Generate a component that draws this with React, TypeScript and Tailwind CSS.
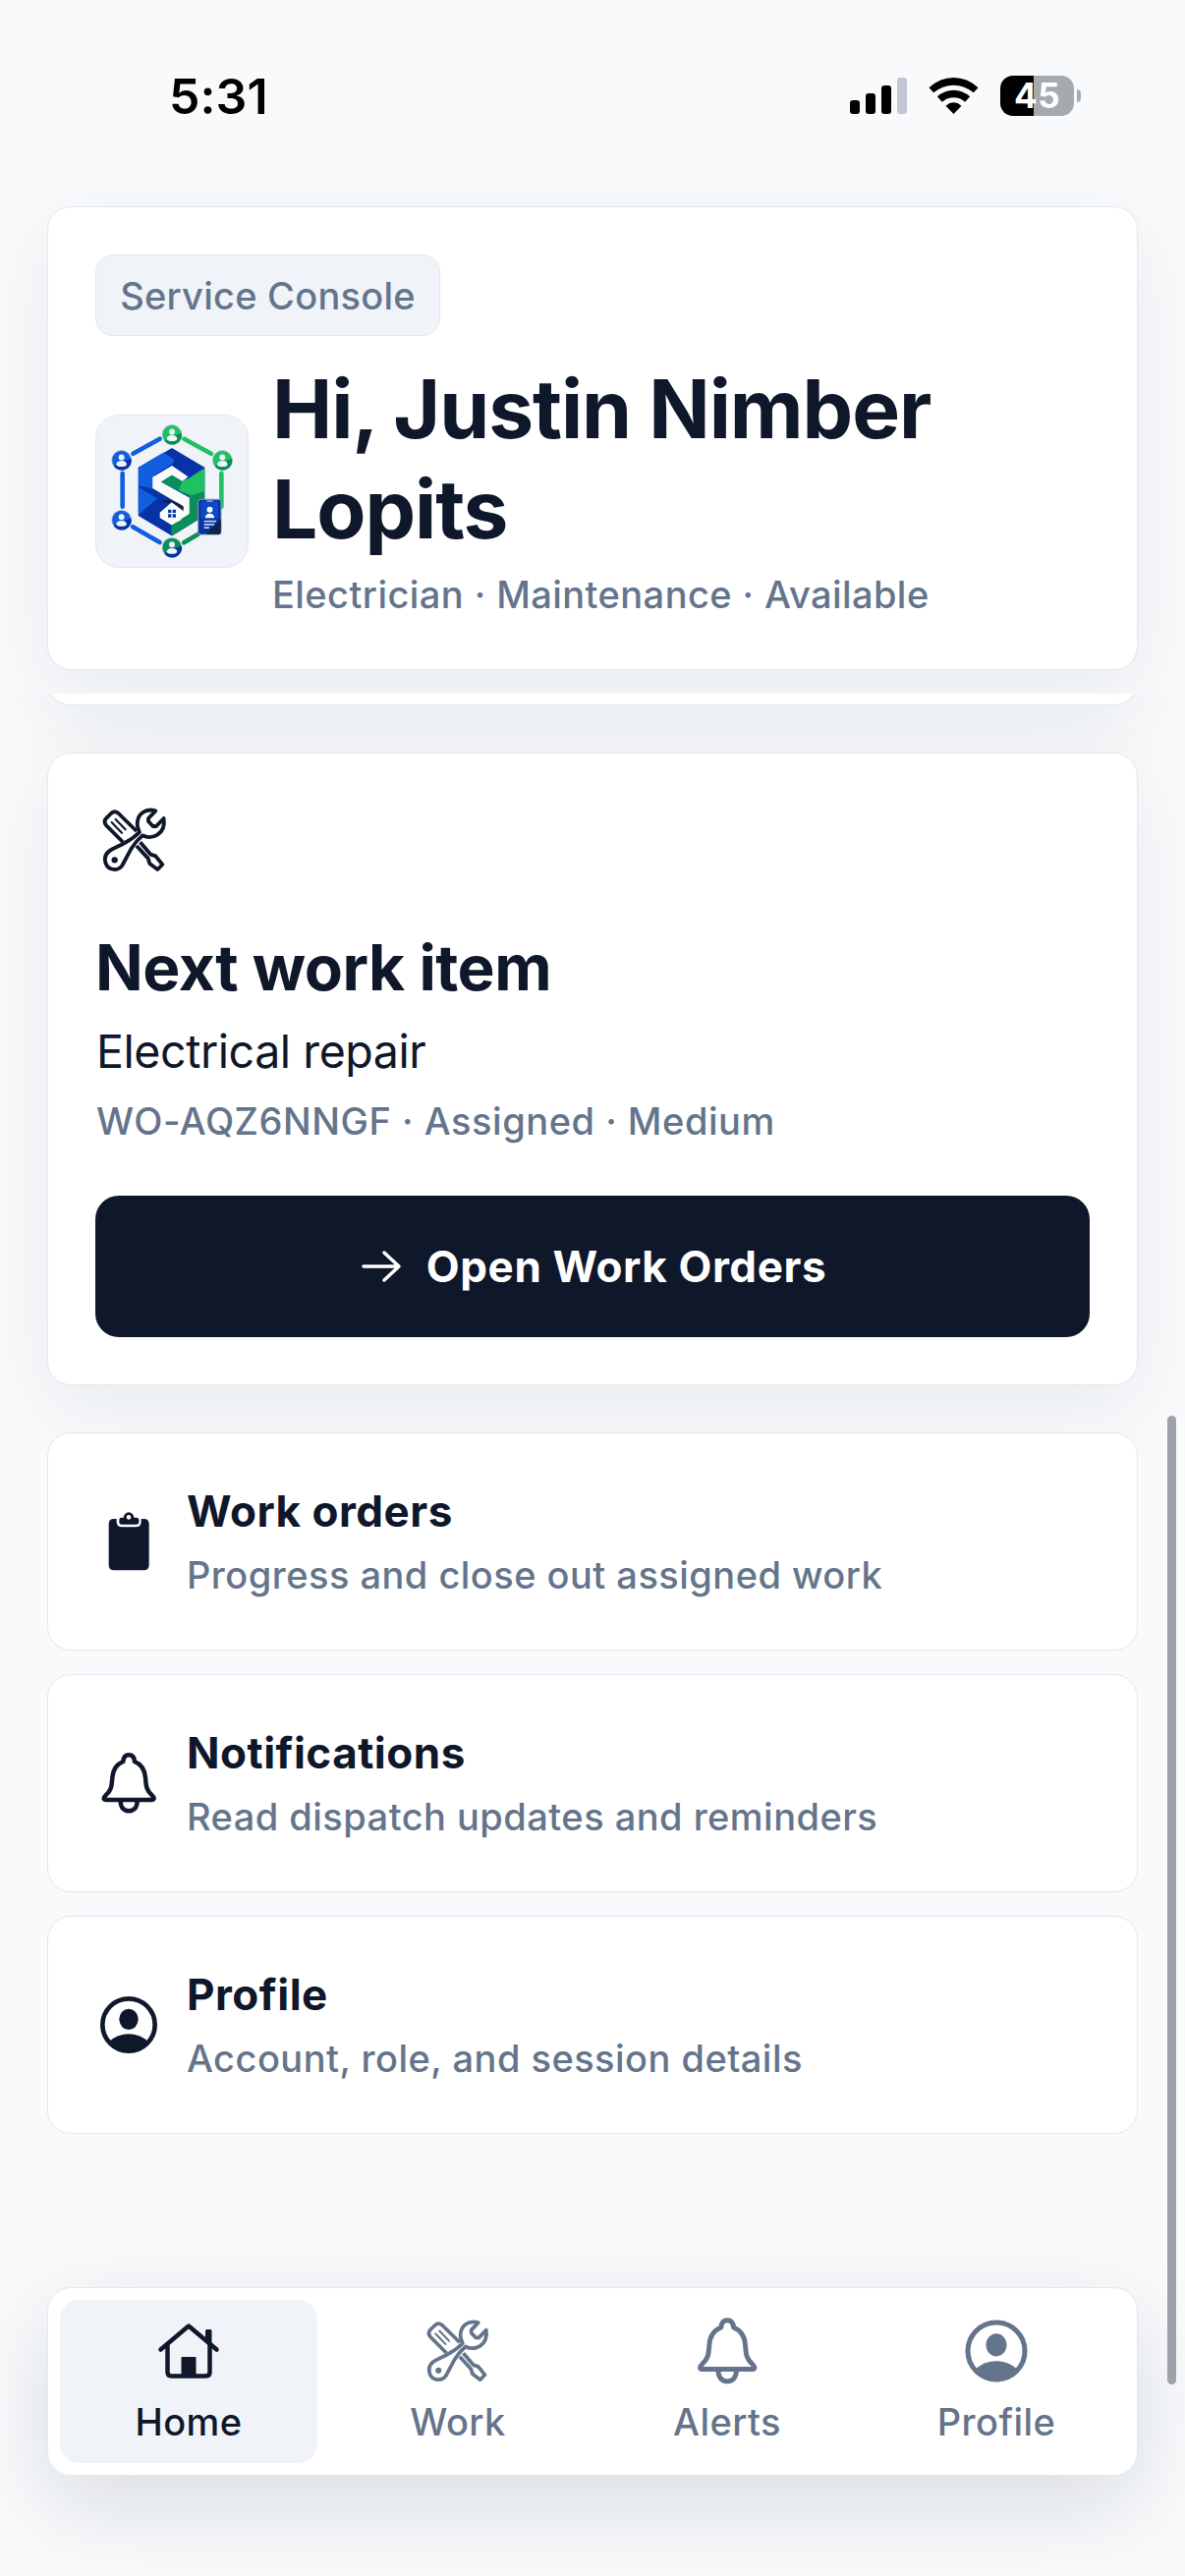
import React from "react";
import clsx from "clsx";

type IconProps = { className?: string };

function ToolsIcon({ className }: IconProps) {
  return (
    <svg
      viewBox="64 84 216 216"
      fill="none"
      stroke="currentColor"
      strokeWidth="11.500"
      strokeLinejoin="round"
      className={className}
    >
      <path d="M136 198 L86 148 Q75 136 86 125 L100 111 Q111 101 123 111 L178 165" />
      <path d="M114 129 L144 160 M102 138 L133 170" strokeWidth="6.500" strokeLinecap="round" />
      <path d="M189 199 L221 236 L236 241 L257 267 L242 282 L218 264 L213 248 L178 210" />
      <path d="M236 103 C205 94 181 112 180 142 C180 152 182 158 187 168 C172 183 155 195 135 205 L104 220 C84 230 78 246 84 264 C92 285 122 288 134 270 L162 218 C171 203 182 190 196 178 C224 192 268 176 261 126 L238 150 H228 L214 135 V126 Z" />
      <circle cx="111" cy="253" r="9.500" fill="currentColor" stroke="none" />
    </svg>
  );
}

function ClipboardIcon({ className }: IconProps) {
  return (
    <svg viewBox="22 50 204 204" fill="currentColor" className={className}>
      <path d="M79 83 H87 V91 Q87 108 104 108 H145 Q162 108 162 91 V83 H170 Q186 83 186 99 V224 Q186 240 170 240 H79 Q63 240 63 224 V99 Q63 83 79 83 Z" />
      <path
        fillRule="evenodd"
        d="M101 79 H108 A16 16 0 0 1 140 79 H148 Q155 79 155 86 V92 Q155 100 147 100 H103 Q95 100 95 92 V86 Q95 79 101 79 Z M124 71 a7 7 0 1 0 0.100 0 Z"
      />
    </svg>
  );
}

function BellIcon({ className }: IconProps) {
  return (
    <svg
      viewBox="22 50 204 204"
      fill="none"
      stroke="currentColor"
      strokeWidth="13.500"
      strokeLinejoin="round"
      className={className}
    >
      <path d="M53 203 H196 C203 203 202 195 196 190 C177 173 177 160 175 135 C173 108 162 94 142 86 C141 72 134 66 124.500 66 C115 66 108 72 107 86 C87 94 76 108 74 135 C72 160 72 173 53 190 C47 195 46 203 53 203 Z" />
      <path d="M99 206 C99 228 111 237 124.500 237 C138 237 150 228 150 206" />
    </svg>
  );
}

function ProfileIcon({ className }: IconProps) {
  return (
    <svg viewBox="24 54 204 204" fill="currentColor" className={className}>
      <circle cx="126" cy="156" r="80" fill="none" stroke="currentColor" strokeWidth="14" />
      <ellipse cx="126" cy="139" rx="29" ry="32" />
      <path d="M67 207 Q92 184 126 184 Q160 184 185 207 A80 80 0 0 1 67 207 Z" />
    </svg>
  );
}

function HomeIcon({ className }: IconProps) {
  return (
    <svg
      viewBox="0 0 74 74"
      fill="none"
      stroke="currentColor"
      strokeWidth="4.500"
      strokeLinecap="round"
      strokeLinejoin="round"
      className={className}
    >
      <path d="M8.500 35.500 L37 11.500 L65.500 35.500" />
      <path d="M15.500 30 V58.500 Q15.500 62.500 19.500 62.500 H54.500 Q58.500 62.500 58.500 58.500 V30" />
      <rect x="29.500" y="43" width="15" height="20" rx="1" fill="currentColor" stroke="none" />
      <path d="M54 16.500 Q54 15 55.500 15 H59 Q60.500 15 60.500 16.500 V34 L54 28 Z" fill="currentColor" stroke="none" />
    </svg>
  );
}

function Person({ x, y, top, bottom }: { x: number; y: number; top: string; bottom: string }) {
  return (
    <g transform={`translate(${x} ${y})`}>
      <circle r="30" fill={top} stroke="#a9b8cc" strokeWidth="2" />
      <path d="M30 -6 A30 30 0 0 1 -24 18 Z" fill={bottom} />
      <circle cy="-9" r="9" fill="#f1f5f9" />
      <path d="M-16 13 Q-15 2 0 2 Q15 2 16 13 Q15 20 0 20 Q-15 20 -16 13 Z" fill="#f1f5f9" />
    </g>
  );
}

function Logo({ className }: IconProps) {
  return (
    <svg viewBox="51 66 468 468" className={className}>
      <g fill="none" strokeWidth="14" strokeLinecap="round">
        <path d="M165 184 L247 138 M132 245 V348 M164 410 L247 458" stroke="#115fdf" />
        <path d="M323 138 L406 184 M438 245 V348" stroke="#20c063" />
        <path d="M322 459 L366 433" stroke="#0b8f58" />
      </g>

      {/* hexagon faces */}
      <path d="M285 166 L386 226 V376 L285 438 L181 376 V226 Z" fill="#0733a6" />
      <path d="M181 226 L258 181 L294 203 L288 214 L230 250 V294 L181 282 Z" fill="#115fdf" />
      <path d="M181 288 L240 322 L185 370 L181 366 Z" fill="#115fdf" />
      <path d="M386 226 V376 L283 438 V398 L338 368 V316 L252 271 L285 250 L317 268 Z" fill="#0b8f58" />
      <path d="M386 230 V300 L345 312 L306 298 L318 268 L334 262 Z" fill="#20c063" />
      <path d="M386 226 L334 262 L285 222 L294 200 Z" fill="#0733a6" />

      {/* S ribbon with the house inside its lower bowl */}
      <path
        d="M225 257 L285 221 L335 255 L317 269 L285 250 L251 271 L339 320 V370 L284 404 L248 382 V366 L284 337 L313 358 H320 V347 L287 327 L225 291 Z"
        fill="#f8fafc"
      />
      <path d="M248 333 Q280 316 320 347 V362 L313 360 L284 337 Z" fill="#14233f" />
      <path d="M284 334 L320 361 L313 389 L284 404 L248 382 V366 Z" fill="#f8fafc" />
      <path d="M273 357 h10 v10 h-10 z M287 357 h10 v10 h-10 z M273 371 h10 v10 h-10 z M287 371 h10 v10 h-10 z" fill="#0733a6" />

      <Person x={285} y={125} top="#20c063" bottom="#0b8f58" />
      <Person x={129} y={204} top="#115fdf" bottom="#0733a6" />
      <Person x={441} y={204} top="#20c063" bottom="#0b8f58" />
      <Person x={129} y={389} top="#115fdf" bottom="#0733a6" />
      <Person x={285} y={474} top="#0b8f58" bottom="#0733a6" />

      {/* phone */}
      <rect x="366" y="325" width="71" height="109" rx="8" fill="#0733a6" stroke="#8aa0bd" strokeWidth="3" />
      <path d="M436 385 V426 Q436 433 429 433 H392 Z" fill="#14233f" />
      <path d="M374 332 H392 V336 H410 V332 H428 V384 H374 Z" fill="#115fdf" opacity="0.500" />
      <path d="M392 331 H411" stroke="#c3cddb" strokeWidth="4" />
      <circle cx="402" cy="357" r="9" fill="#f8fafc" />
      <path d="M388 383 Q388 369 402 369 Q416 369 416 383 Z" fill="#f8fafc" />
      <path d="M384 393 H422 M384 403 H416 M384 413 H400" stroke="#c3cddb" strokeWidth="5" />
    </svg>
  );
}

function StatusBar() {
  return (
    <div className="flex h-[195px] items-center justify-between pl-[172px] pr-[106px] text-black">
      <span className="text-[50px] font-semibold leading-none tracking-[0.1px]">5:31</span>
      <div className="flex items-center">
        <svg viewBox="0 0 58 37" className="mr-[22px] h-[37px] w-[58px]">
          <rect x="0" y="23" width="10" height="14" rx="3" />
          <rect x="16" y="16" width="10" height="21" rx="3" />
          <rect x="32" y="8" width="10" height="29" rx="3" />
          <rect x="48" y="0" width="10" height="37" rx="3" fill="#c1c7d0" />
        </svg>
        <svg viewBox="316 57 152 111" className="mr-[22px] h-[37px] w-[51px]">
          <path d="M317 88 Q350 57 392 57 Q434 57 467 88 L453 103 Q426 80 392 80 Q358 80 331 103 Z" />
          <path d="M342 115 Q364 95 392 95 Q420 95 442 115 L427 131 Q411 118 392 118 Q373 118 357 131 Z" />
          <path d="M368 143 Q379 133 392 133 Q405 133 416 143 L392 168 Z" />
        </svg>
        <div className="flex h-[41px] w-[75px] items-center justify-center rounded-[13px] bg-linear-to-r from-black from-45% to-[#a5aab1] to-45%">
          <span className="text-[35px] font-bold leading-none tracking-[0.5px] text-white">45</span>
        </div>
        <div className="ml-[3px] h-[13px] w-[4px] rounded-r-full bg-[#a5aab1]" />
      </div>
    </div>
  );
}

const links = [
  {
    title: "Work orders",
    description: "Progress and close out assigned work",
    Icon: ClipboardIcon,
  },
  {
    title: "Notifications",
    description: "Read dispatch updates and reminders",
    Icon: BellIcon,
  },
  {
    title: "Profile",
    description: "Account, role, and session details",
    Icon: ProfileIcon,
  },
];

const tabs = [
  { label: "Home", Icon: HomeIcon, size: "size-[74px]" },
  { label: "Work", Icon: ToolsIcon, size: "size-[70px]" },
  { label: "Alerts", Icon: BellIcon, size: "size-[74px]" },
  { label: "Profile", Icon: ProfileIcon, size: "size-[74px]" },
];

const card = "rounded-[24px] border border-[#e2e8f0] bg-white";
const raised = "shadow-[0_24px_84px_rgba(15,23,42,0.065)]";
const caption = "text-[38px] font-medium leading-[54px] text-[#64748b]";

export default function App() {
  const activeTab = "Home";

  return (
    <div className="relative flex h-[2622px] w-[1206px] flex-col overflow-hidden bg-[#f8fafc] font-['Inter','Liberation_Sans',sans-serif] text-[#0f172a]">
      {/* Pinned header */}
      <header className="h-[706px] shrink-0 overflow-hidden">
        <StatusBar />
        <section className={clsx(card, raised, "mx-[48px] mt-[15px] h-[472px] p-[48px]")}>
          <div className="flex h-[83px] w-[351px] items-center justify-center rounded-[18px] border border-[#e2e8f0] bg-[#f0f4f8]">
            <span className={clsx(caption, "whitespace-nowrap tracking-[0.25px]")}>Service Console</span>
          </div>
          <div className="mt-[24px] flex items-center gap-[24px]">
            <div className="size-[156px] shrink-0 overflow-hidden rounded-[24px] border border-[#e2e8f0] bg-[#f0f4f8]">
              <Logo className="size-full" />
            </div>
            <div className="pb-px">
              <h1 className="w-[720px] text-[82px] font-bold leading-[102px] tracking-[-1.1px]">
                Hi, Justin Nimber Lopits
              </h1>
              <p className={clsx(caption, "mt-[8px] tracking-[0.43px]")}>Electrician · Maintenance · Available</p>
            </div>
          </div>
        </section>
      </header>

      {/* Scrolled content */}
      <main className="shrink-0 overflow-hidden px-[48px]">
        <div className={clsx(card, raised, "-mt-[300px] h-[312px]")} />

        <section className={clsx(card, raised, "mt-[48px] h-[644px] p-[48px]")}>
          <div className="flex size-[78px] items-center justify-center pl-px pt-px">
            <ToolsIcon className="size-[72px]" />
          </div>
          <h2 className="mt-[50px] text-[64px] font-bold leading-[84px] tracking-[-0.5px]">Next work item</h2>
          <p className="mt-[10px] pl-px text-[46.5px] leading-[66px] tracking-[-0.43px]">Electrical repair</p>
          <p className={clsx(caption, "mt-[11px] pl-px tracking-[0.53px]")}>WO-AQZ6NNGF · Assigned · Medium</p>
          <button className="mt-[49px] flex h-[144px] w-full items-center justify-center gap-[23px] rounded-[24px] bg-[#0f172a] text-white">
            <svg
              viewBox="0 0 46 46"
              fill="none"
              stroke="currentColor"
              strokeWidth="3.500"
              strokeLinecap="round"
              strokeLinejoin="round"
              className="size-[46px]"
            >
              <path d="M5 23 H41 M26 9 L41 23 L26 37" />
            </svg>
            <span className="text-[44px] font-bold tracking-[0.6px]">Open Work Orders</span>
          </button>
        </section>

        <div className="mt-[48px] flex flex-col gap-[24px]">
          {links.map(({ title, description, Icon }) => (
            <a key={title} className={clsx(card, "flex h-[222px] items-center gap-[25px] px-[48px]")}>
              <Icon className="size-[68px] shrink-0" />
              <div>
                <h3 className="text-[44px] font-bold leading-[60px] tracking-[0.5px]">{title}</h3>
                <p className={clsx(caption, "mt-[8px] tracking-[0.47px]")}>{description}</p>
              </div>
            </a>
          ))}
        </div>
      </main>

      {/* Tab bar */}
      <nav className="mx-[48px] mt-[156px] grid h-[192px] shrink-0 grid-cols-4 gap-[12px] rounded-[24px] border border-[#e2e8f0] bg-white p-[12px] shadow-[0_30px_90px_rgba(15,23,42,0.125)]">
        {tabs.map(({ label, Icon, size }) => (
          <button
            key={label}
            className={clsx(
              "flex flex-col items-center justify-center gap-[8px] rounded-[20px]",
              label === activeTab ? "bg-[#f0f4f8] text-[#0f172a]" : "text-[#64748b]"
            )}
          >
            <span className="flex size-[74px] items-center justify-center">
              <Icon className={size} />
            </span>
            <span className="text-[38px] font-medium leading-[54px] tracking-[0.45px]">{label}</span>
          </button>
        ))}
      </nav>

      {/* Scroll indicator */}
      <div className="absolute right-[9px] top-[1441px] h-[986px] w-[9px] rounded-full bg-[#9fa3a9]" />
    </div>
  );
}
